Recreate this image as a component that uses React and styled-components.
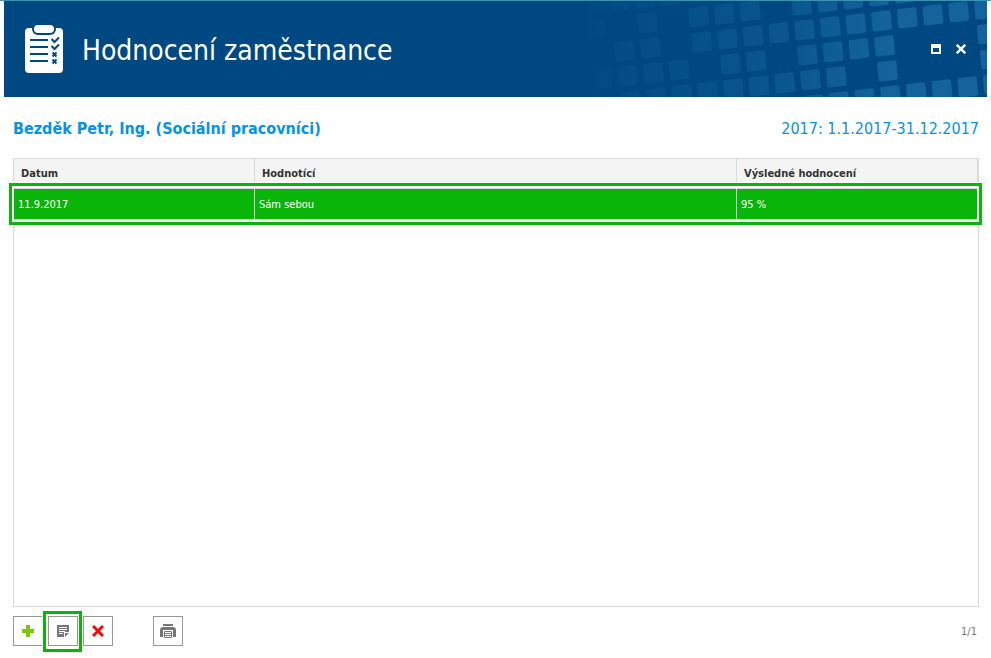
import React from "react";
import styled, { createGlobalStyle, css } from "styled-components";

const $navy = "#004882";
const $blue = "#0693e3";
const $green = "#09b509";
const $line = "#d9d9d9";

const GlobalStyle = createGlobalStyle`
  * {
    box-sizing: border-box;
  }
  body {
    margin: 0;
    background: #fff;
    font-family: "DejaVu Sans Condensed", "DejaVu Sans", sans-serif;
    font-size: 11px;
  }
`;

// tile coordinates on the slanted header grid: [row, columns]
const TILES = [
  [-2, [-8, -7, -6, -5, -4]],
  [-1, [-8, -6, -4, -3, -2, 0, 1, 2, 3, 4]],
  [0, [-7, -6, -4, -3, -2, -1, 0, 1, 2, 3, 4, 5, 6, 7]],
  [1, [-8, -7, -6, -5, -3, -2, 0, 1, 2, 3, 7]],
  [2, [-7, -6, -5, -4, -3, -2, -1, 0, 1, 3, 7]],
  [3, [0, 1, 2, 3, 4, 5, 6, 7]],
];

const COLUMNS = ["Datum", "Hodnotící", "Výsledné hodnocení"];
const ROWS = [{ id: 1, date: "11.9.2017", rater: "Sám sebou", result: "95 %" }];

const Page = styled.div`
  display: flex;
  flex-direction: column;
  min-height: 100vh;
  border-top: 1px solid #3a97ab;
`;
const Header = styled.header`
  position: relative;
  display: flex;
  align-items: center;
  height: 96px;
  margin: 0 4px;
  padding: 0 20px;
  overflow: hidden;
  background: ${$navy};
`;
const HeaderPattern = styled.svg`
  position: absolute;
  top: 0;
  right: 0;
`;
const Title = styled.h1`
  flex: 1;
  margin: 0 0 0 18px;
  padding-top: 4px;
  color: #fff;
  font-size: 28px;
  line-height: 34px;
  font-weight: 400;
`;
const WindowButtons = styled.div`
  position: relative;
  display: flex;
  gap: 13px;
`;
const WindowButton = styled.button`
  display: flex;
  padding: 1px;
  border: 0;
  background: none;
  color: #fff;
  cursor: pointer;
`;
const Content = styled.main`
  display: flex;
  flex: 1;
  flex-direction: column;
  padding: 20px 12px 7px 13px;
`;
const Summary = styled.div`
  display: flex;
  justify-content: space-between;
  margin-bottom: 18px;
  color: ${$blue};
  font-size: 16px;
  line-height: 23px;
`;
const Employee = styled.h2`
  margin: 0;
  font-size: inherit;
  font-weight: 700;
`;
const Grid = styled.div`
  flex: 1;
  border: 1px solid ${$line};
`;
const Table = styled.table`
  width: 100%;
  table-layout: fixed;
  border-collapse: separate;
  border-spacing: 0;
`;
const Col = styled.col`
  width: ${({ $width }) => $width};
`;
const Th = styled.th`
  height: 29px;
  padding: 0 7px;
  border-right: 1px solid ${$line};
  background: #f4f4f4;
  color: #333;
  text-align: left;
`;
const highlight = css`
  position: relative;
  &::after {
    content: "";
    position: absolute;
    inset: ${({ $inset }) => $inset};
    border: 3px solid ${$green};
    box-shadow: 0 0 0 1px #fff, inset 0 0 0 ${({ $halo }) => $halo || "1px"} #fff;
    pointer-events: none;
  }
`;
const Tr = styled.tr`
  ${highlight}
`;
const Td = styled.td`
  height: 32px;
  padding: 0 4px;
  border-top: 1px solid ${$line};
  border-right: 1px solid ${$line};
  border-bottom: 1px solid ${$line};
  background: ${$green};
  color: #fff;
`;
const Footer = styled.footer`
  display: flex;
  align-items: center;
  gap: 5px;
  padding-top: 4px;
`;
const Tool = styled.span`
  display: flex;
  padding: 5px 0;
  ${({ $inset }) => $inset && highlight}
`;
const ToolButton = styled.button`
  display: flex;
  align-items: center;
  justify-content: center;
  width: 30px;
  height: 30px;
  padding: 0;
  border: 1px solid #999;
  background: #fff;
  cursor: pointer;
`;
const Spacer = styled.span`
  width: 30px;
`;
const PageCount = styled.span`
  margin-left: auto;
  padding-right: 2px;
  color: #777;
`;

const Pattern = () => (
  <HeaderPattern width="400" height="96" viewBox="0 0 400 96" aria-hidden="true">
    <defs>
      <linearGradient id="tiles" gradientUnits="userSpaceOnUse" x1="0" y1="0" x2="400" y2="0">
        <stop offset="0" stopColor="#1a6ba5" stopOpacity="0.02" />
        <stop offset="0.1" stopColor="#1a6ba5" stopOpacity="0.14" />
        <stop offset="0.5" stopColor="#1a6ba5" stopOpacity="0.4" />
        <stop offset="0.75" stopColor="#1a6ba5" stopOpacity="0.76" />
        <stop offset="1" stopColor="#1a6ba5" stopOpacity="0.76" />
      </linearGradient>
    </defs>
    <g fill="url(#tiles)">
      {TILES.map(([row, cols]) =>
        cols.map((col) => {
          const x = 217.5 + col * 25.7 + row * 3;
          const y = 29 - col * 3 + row * 25;
          // corners of a 20px tile leaning the same way as the grid
          return (
            <path
              key={`${row}/${col}`}
              d={`M${x - 8.5} ${y - 9}L${x + 6.5} ${y - 10.8}q2.2 -.2 2.5 2L${x + 10.4} ${y + 6.2}q.2 2.2 -2 2.5L${x - 6.5} ${y + 10.6}q-2.2 .2 -2.5 -2L${x - 10.4} ${y - 6.4}q-.2 -2.2 1.9 -2.6z`}
            />
          );
        })
      )}
    </g>
  </HeaderPattern>
);

const ClipboardIcon = () => (
  <svg width="40" height="50" viewBox="0 0 40 50" aria-hidden="true">
    <rect x="1" y="4" width="38" height="45" rx="4" fill="#fff" />
    <rect x="8" y="-1" width="24" height="12" rx="6" fill={$navy} />
    <rect x="10" y="1" width="20" height="8" rx="4" fill="#fff" />
    <path d="M6 16h18M6 23h18M6 30h18M6 37h18" stroke={$navy} strokeWidth="2" />
    <path
      d="M27.5 15l3 3 4.5-4.5M27.5 22l3 3 4.5-4.5M28.5 28.5l4 4m0-4l-4 4M28.5 35.5l4 4m0-4l-4 4"
      fill="none"
      stroke={$navy}
      strokeWidth="2"
    />
  </svg>
);

const MaximizeIcon = () => (
  <svg width="10" height="10" viewBox="0 0 10 10" aria-hidden="true">
    <path d="M0 0h10v10H0zM2 4v4h6V4z" fill="currentColor" fillRule="evenodd" />
  </svg>
);

const CloseIcon = () => (
  <svg width="10" height="10" viewBox="0 0 10 10" aria-hidden="true">
    <path d="M.7 .7l8.6 8.6M9.3 .7L.7 9.3" stroke="currentColor" strokeWidth="2.4" />
  </svg>
);

const AddIcon = () => (
  <svg width="12" height="12" viewBox="0 0 12 12" aria-hidden="true">
    <path d="M4 0h4v4h4v4H8v4H4V8H0V4h4z" fill="#7ac70c" />
  </svg>
);

const NoteIcon = () => (
  <svg width="12" height="12" viewBox="0 0 12 12" aria-hidden="true">
    <path d="M0 0h12v7H7v5H0z" fill="#777" />
    <path d="M8 8h4l-4 4z" fill="#777" />
    <path d="M2 2.5h8M2 4.5h8M2 6.5h6M2 8.5h4" stroke="#fff" />
  </svg>
);

const DeleteIcon = () => (
  <svg width="12" height="12" viewBox="0 0 12 12" aria-hidden="true">
    <path d="M1 1l10 10M11 1L1 11" stroke="#f30b0b" strokeWidth="3" />
  </svg>
);

const PrintIcon = () => (
  <svg width="16" height="15" viewBox="0 0 16 15" aria-hidden="true">
    <path d="M3 0h10v2H3zM2 3h12l2 2v8H0V5z" fill="#777" />
    <path d="M3 6h10v9H3z" fill="#fff" />
    <path d="M4.5 7.5h7v6h-7zM5 9.5h6M5 11.5h6" fill="none" stroke="#777" />
  </svg>
);

const TOOLS = [
  { id: "add", label: "Přidat", icon: AddIcon },
  { id: "edit", label: "Upravit", icon: NoteIcon, inset: "0 -4px -1px -5px" },
  { id: "delete", label: "Smazat", icon: DeleteIcon },
];

const App = () => {
  return (
    <>
      <GlobalStyle />
      <Page>
        <Header>
          <Pattern />
          <ClipboardIcon />
          <Title>Hodnocení zaměstnance</Title>
          <WindowButtons>
            <WindowButton type="button" aria-label="Maximalizovat">
              <MaximizeIcon />
            </WindowButton>
            <WindowButton type="button" aria-label="Zavřít">
              <CloseIcon />
            </WindowButton>
          </WindowButtons>
        </Header>
        <Content>
          <Summary>
            <Employee>Bezděk Petr, Ing. (Sociální pracovníci)</Employee>
            <span>2017: 1.1.2017-31.12.2017</span>
          </Summary>
          <Grid>
            <Table>
              <colgroup>
                <Col $width="25%" />
                <Col $width="50%" />
                <Col $width="25%" />
              </colgroup>
              <thead>
                <tr>
                  {COLUMNS.map((name) => (
                    <Th key={name} scope="col">
                      {name}
                    </Th>
                  ))}
                </tr>
              </thead>
              <tbody>
                {ROWS.map((row) => (
                  <Tr key={row.id} $inset="-5px -4px -5px -5px" $halo="2px">
                    <Td>{row.date}</Td>
                    <Td>{row.rater}</Td>
                    <Td>{row.result}</Td>
                  </Tr>
                ))}
              </tbody>
            </Table>
          </Grid>
          <Footer>
            {TOOLS.map((item) => (
              <Tool key={item.id} $inset={item.inset}>
                <ToolButton type="button" aria-label={item.label}>
                  <item.icon />
                </ToolButton>
              </Tool>
            ))}
            <Spacer />
            <ToolButton type="button" aria-label="Tisk">
              <PrintIcon />
            </ToolButton>
            <PageCount>1/1</PageCount>
          </Footer>
        </Content>
      </Page>
    </>
  );
};
export default App;
